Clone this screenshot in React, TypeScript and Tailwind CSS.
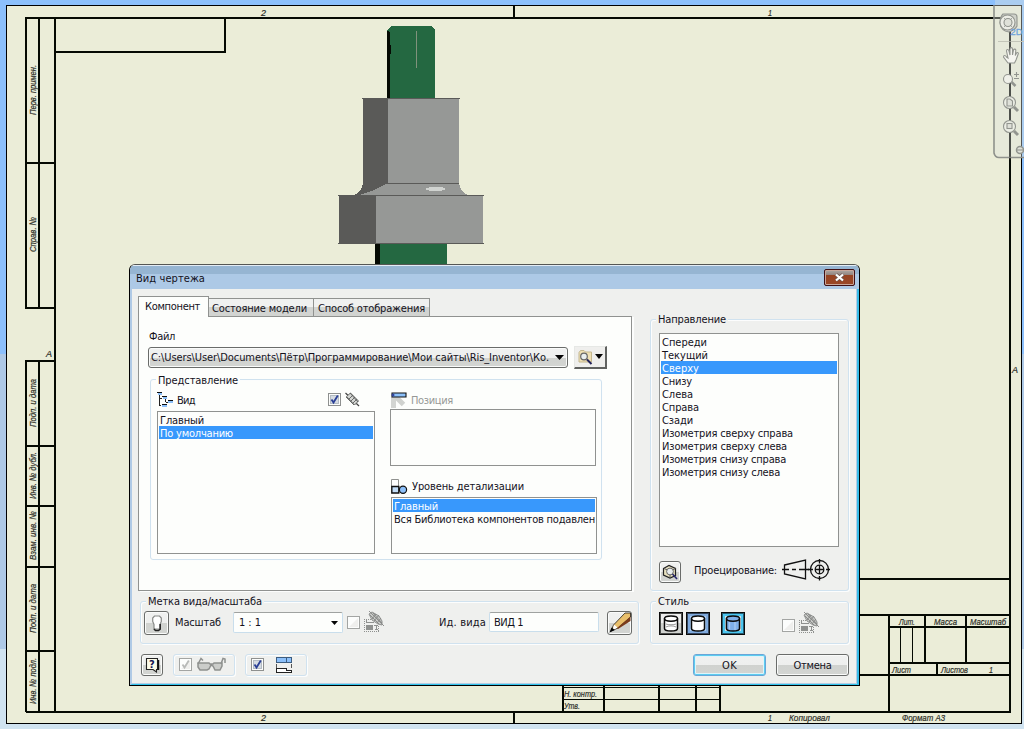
import React, { useLayoutEffect, useRef, useState } from "react";

/* Label whose tracking is tuned so that it takes up a given width. */
function Label({ w, className = "", children }: { w: number; className?: string; children: string }) {
  const ref = useRef<HTMLSpanElement>(null);
  const [gap, setGap] = useState(0);
  useLayoutEffect(() => {
    if (ref.current) {
      const natural = ref.current.getBoundingClientRect().width;
      setGap((w - natural) / children.length);
    }
  }, []);
  return (
    <span ref={ref} style={{ letterSpacing: gap + "px" }} className={"inline-block whitespace-pre leading-[13px] " + className}>
      {children}
    </span>
  );
}

function Group({ title, w, className = "", titleClass = "-top-[7px] bg-[#eff0ee]", children }: { title?: string; w?: number; className?: string; titleClass?: string; children: React.ReactNode }) {
  return (
    <div className={"relative shrink-0 rounded-[3px] border border-[#d0e2ef] shadow-[inset_1px_1px_0_#fcfdfd,1px_1px_0_#fcfdfd] " + className}>
      {title && (
        <div className={"absolute left-[5px] flex h-[13px] px-[2px] " + titleClass}>
          <Label w={w || 0}>{title}</Label>
        </div>
      )}
      {children}
    </div>
  );
}

function Check({ on, dim, className = "" }: { on?: boolean; dim?: boolean; className?: string }) {
  return (
    <svg className={"block shrink-0 " + className} width="13" height="13" viewBox="0 0 13 13">
      <rect x="0.5" y="0.5" width="12" height="12" fill="#fcfdfc" stroke={dim ? "#a3a5a3" : "#8e908f"} />
      {on && !dim && <rect x="2.5" y="2.5" width="8" height="8" fill="#d5dbe2" stroke="#b4bcc4" />}
      {dim && <path d="M2 11 11 2v9z" fill="#efefed" />}
      {on && <path d="M3.5 6.5 5.5 9.5 9.8 2.5" fill="none" stroke={dim ? "#b8bab8" : "#2a3f96"} strokeWidth="1.8" />}
    </svg>
  );
}

function List({ items, selected, className = "" }: { items: [string, number][]; selected: number; className?: string }) {
  return (
    <div className={"shrink-0 overflow-hidden border border-[#909290] bg-[#fdfefc] px-px " + className}>
      {items.map(([t, w], i) => (
        <div key={t} className={"flex h-[13px] pl-px pt-px " + (i === selected ? "bg-[#3898fc] text-white" : "")}>
          <Label w={w}>{t}</Label>
        </div>
      ))}
    </div>
  );
}

const btn = "flex shrink-0 items-center justify-center rounded-[3px] border border-[#6a6c6a] bg-[linear-gradient(#f0f1f0_0%,#eeefee_50%,#d0d2cf_50%,#d3d5d2_100%)] shadow-[inset_0_0_0_1px_#fafbfa] ";

function Tree() {
  return (
    <svg className="block shrink-0" width="16" height="16" viewBox="0 0 16 16" shapeRendering="crispEdges">
      <path d="M1 1h4v2H1zM6 5h4v2H6zM11 9h5v2h-5zM5 13h5v2H5z" fill="#8cc0fa" />
      <path d="M2 3h1v11H2zM3 6h2v1H3zM3 13h1v1H3zM8 7h1v3H8zM9 10h2v1H9z" fill="#222" />
      <path d="M0 .5h5M5 4.500h5M11 8.500h5M5 12.500h5" stroke="#111" />
    </svg>
  );
}

function Link() {
  return (
    <svg className="block shrink-0" width="15" height="15" viewBox="0 0 15 15">
      <path d="M.5 1 14 14" stroke="#444" strokeWidth="1.200" />
      <path d="M1.500 4.500 5.500 1 13.500 9 9.500 13z" fill="#d4d6d3" stroke="#686a68" />
      <path d="M1 5 9 13M5 1l8 9M4 7l4-4M6 9l4-4M8 11l4-4" stroke="#5c5e5c" strokeWidth=".9" />
    </svg>
  );
}

function StyleLink() {
  return (
    <svg className="block shrink-0" width="21" height="22" viewBox="0 0 21 22">
      <path d="M0 8.500h7M.5 8v13M0 20.500h15M14.500 15v6" stroke="#8f918f" strokeDasharray="1 1" fill="none" shapeRendering="crispEdges" />
      <path d="M2 14h7v5H2z" fill="#8f918f" />
      <path d="M2 11.500h8M2.500 9v3M10 14.500h4M12.500 14v5M11 18.500h3" stroke="#8f918f" />
      <path d="M5 3 8 1l7 4 3 5v4l-4-1-6-4z" fill="#c8cac7" stroke="#8f918f" />
      <path d="m5 0 15 15M9 2l9 10M6 4l9 9M8 8l4-5M10 10l5-6M13 12l4-5" stroke="#848684" strokeWidth=".9" />
    </svg>
  );
}

function Cyl({ fill, hidden }: { fill: string; hidden?: boolean }) {
  return (
    <svg className="block shrink-0" width="16" height="17" viewBox="0 0 16 17">
      <path d="M1.500 3.500v10c0 1.500 3 2.500 6.500 2.500s6.500-1 6.500-2.500v-10" fill={fill} stroke="#0a0a0a" strokeWidth="1.500" />
      <ellipse cx="8" cy="3.600" rx="6.500" ry="2.600" fill={fill} stroke="#0a0a0a" strokeWidth="1.500" />
      {hidden && <path d="M3 12c2-1.500 8-1.500 10 0M3 9c2 1 8 1 10 0" fill="none" stroke="#999" strokeWidth="1" />}
      {fill !== "#fff" && <path d="M4.500 7v7.500M10 7V15" stroke="#a8caf2" strokeWidth="1.300" />}
    </svg>
  );
}

type Cap = [string, number, number, number];
const captions: Cap[] = [
  ["2", 261, 15.500, 5], ["1", 768, 15.500, 4], ["2", 261, 720.500, 5], ["1", 768, 720.500, 4],
  ["А", 46, 357, 6], ["А", 1012, 373, 6],
  ["Лит.", 899, 624.500, 16], ["Масса", 934, 624.500, 23], ["Масштаб", 970, 624.500, 36],
  ["Лист", 892, 672.500, 19], ["Листов", 941, 672.500, 27], ["1", 989, 672.500, 4],
  ["Н. контр.", 564, 697, 33], ["Утв.", 564, 709, 16],
  ["Копировал", 789, 720.500, 41], ["Формат А3", 902, 720.500, 43],
];
const sideCaptions: Cap[] = [
  ["Перв. примен.", 36, 115, 50], ["Справ. №", 36, 252, 35],
  ["Подп. и дата", 36, 427, 48], ["Инв. № дубл.", 36, 499, 47],
  ["Взам. инв. №", 36, 560, 49], ["Подп. и дата", 36, 633, 49], ["Инв. № подл.", 36, 704, 46],
];

function Drawing() {
  return (
    <svg className="block" width="1024" height="729" viewBox="0 0 1024 729">
      <rect width="1024" height="354" fill="#8cc0fc" />
      <rect y="354" width="1024" height="295" fill="#aec9e6" />
      <rect y="649" width="1024" height="80" fill="#d0e3f0" />
      <g shapeRendering="crispEdges">
        <rect x="6.500" y="5.500" width="1015" height="718" fill="#ebedd8" stroke="#000" />
        <g stroke="#050a03" strokeWidth="2" fill="none">
          <path d="M26 18H1011M1010 17V713M26 712H1011M55 17V713M26 17V308H55M39 17V308M26 163H55" />
          <path d="M26 712V361H55M39 361V712M26 446H55M26 506H55M26 567H55M26 651H55" />
          <path d="M55 52H225V18M514 6V18M514 712V723" />
          <path d="M855 579H1010M855 615H1010M889 615V712M889 627H1010M925 615V663M966 615V663M889 663H1010M937 663V675M855 675H1010" />
          <path d="M563 680V712M604 680V712M659 680V712M696 680V712M720 680V712" />
        </g>
        <path d="M900.500 627V663M912.500 627V663M563 687.500H720M563 699.500H720" stroke="#050a03" />
      </g>
      <g fontFamily="'Liberation Sans Narrow','Liberation Sans',sans-serif" fontStyle="italic" fontSize="9.500" fill="#2a2c26" stroke="#2a2c26" strokeWidth=".2">
        {captions.map(([t, x, y, w], i) => (
          <text key={i} x={x} y={y} textLength={w} lengthAdjust="spacingAndGlyphs">{t}</text>
        ))}
        {sideCaptions.map(([t, x, y, w], i) => (
          <text key={i} transform={`translate(${x} ${y}) rotate(-90)`} textLength={w} lengthAdjust="spacingAndGlyphs">{t}</text>
        ))}
      </g>
      <g shapeRendering="crispEdges">
        <path d="M391 26H431L435 30V98H387V30z" fill="#246841" />
        <path d="M387 31h2l1 2v12h1v9h-1v44h-3z" fill="#050a03" />
        <path d="M416.500 31V68" stroke="#80927c" />
        <path d="M363 98H459V183Q461 193 468 195H354Q361 193 363 183z" fill="#969896" />
        <path d="M363 98H388V183L374 190 359 195H354Q361 193 363 183z" fill="#5a5a58" />
        <path d="M339 195H483V243H339z" fill="#969896" />
        <path d="M339 195H376V243H339z" fill="#5a5a58" />
        <path d="M362 98.500H460M386 183.500H459M338 195.500H484M338 243.500H484" stroke="#5a5a58" />
        <path d="M424 189 430 187H442L446 189 440 191H430z" fill="#d0d3d0" />
        <path d="M375 244H447V266H375z" fill="#246841" />
        <path d="M375 244H380V266H375z" fill="#050a03" />
      </g>
    </svg>
  );
}

function NavBar() {
  return (
    <svg className="absolute left-[990px] top-0 block" width="34" height="162" viewBox="990 0 34 162">
      <path d="M995 0H1024V158H999Q995 158 995 153z" fill="#e0e2dc" fillOpacity=".38" />
      <path d="M994 5V153Q995 157.500 999 157.500H1024" fill="none" stroke="#8e918c" strokeWidth="1.600" />
      <path d="M998 41.500H1024" stroke="#c3c5b9" />
      <path d="M1010 17V160" stroke="#333" strokeWidth="1.600" opacity=".35" />
      <g fill="#dfe1d9" stroke="#92958f" strokeWidth="1.100">
        <path d="M1003 14h11q3 0 3 3v9q-2 4-8 6-8-1-9-9 0-6 3-9z" fill="#cfd1ca" />
        <circle cx="1007.500" cy="22.500" r="7.500" fill="#ecede6" /><circle cx="1008" cy="22.500" r="4" />
        <path d="m1004 18 2 2M1012 18l-2 2M1004 27l2-2M1012 27l-2-2" fill="none" strokeWidth=".8" />
        <path d="M1008 63l-4.500-6c0-2 2-2 3 0l1.500 1-1.500-7c0-1.800 2-2 2.500 0l1 4v-6c0-1.800 2.500-1.800 2.500 0v6l1-5c.5-1.500 2.500-1 2.300.5l-.5 5 1.200-2.500c1-1 2.200-.3 1.700 1l-2.200 6-1.500 3z" fill="#f5f5f0" />
        <path d="m1011.500 82 4 4" strokeWidth="2.500" /><circle cx="1008" cy="79" r="4.500" fill="#eff0e9" />
        <path d="M1014 74.500h5M1016.500 72v5M1014 78.500h5" fill="none" />
        <path d="m1014 107 4 4" strokeWidth="3" /><circle cx="1009.500" cy="102.500" r="6" fill="#eceee5" />
        <path d="M1007 99h3l2.500 2v5h-5.500z" />
        <path d="m1014 131 4 4" strokeWidth="3" /><circle cx="1009.500" cy="126.500" r="6" fill="#eceee5" /><rect x="1007" y="123.500" width="5" height="5" />
        <circle cx="1020" cy="150" r="3.500" strokeWidth="1.500" /><path d="M1017 150h6" />
      </g>
      <text x="1010.500" y="35" fontSize="9.500" fontFamily="Liberation Sans, sans-serif" fill="#6fa3dc" stroke="#6fa3dc" strokeWidth=".3" textLength="12" lengthAdjust="spacingAndGlyphs">2D</text>
    </svg>
  );
}

const directions: [string, number][] = [
  ["Спереди", 45], ["Текущий", 46], ["Сверху", 37], ["Снизу", 30], ["Слева", 31], ["Справа", 37], ["Сзади", 31],
  ["Изометрия сверху справа", 131], ["Изометрия сверху слева", 125], ["Изометрия снизу справа", 124], ["Изометрия снизу слева", 118],
];

export default function App() {
  return (
    <div className="relative h-[729px] w-[1024px] overflow-hidden text-[11px] leading-[13px] text-[#14121c] [font-family:'DejaVu_Sans_Condensed','DejaVu_Sans',sans-serif]">
      <Drawing />
      <NavBar />
      <div className="absolute left-[129px] top-[264px] flex h-[422px] w-[731px] flex-col overflow-hidden rounded-t-[6px] border border-black border-t-[#555754] bg-[#eff0ee]">
        <div className="flex h-[24px] shrink-0 justify-between border-t border-[#e4ecf4] bg-[linear-gradient(#96b5d2_0,#96b5d2_8px,#adc9e6_8px)] pl-[6px] pr-[4px]">
          <Label w={69} className="mt-[6px]">Вид чертежа</Label>
          <div className="mt-[3px] flex h-[17px] w-[31px] items-center justify-center rounded-[2px] border border-[#401015] bg-[linear-gradient(#aeaaa7_0,#92827c_5px,#964322_5px,#9b4828)] shadow-[inset_0_0_0_1px_#c9a79b]">
            <svg width="11" height="9" viewBox="0 0 11 9"><path d="M2 1.500 9 7.500M9 1.500 2 7.500" stroke="#6a5550" strokeWidth="3.600" /><path d="M2 1.500 9 7.500M9 1.500 2 7.500" stroke="#fff" strokeWidth="2.200" /></svg>
          </div>
        </div>

        <div className="flex flex-1 border-x-2 border-b border-l-[#b0cae6] border-r-[#38bce8] border-b-[#30c4ec] shadow-[inset_-1px_-1px_0_#b4cce4]">
          <div className="flex w-[512px] shrink-0 flex-col pl-[6px] pt-[7px]">
            <div className="flex h-[20px] items-end">
              <div className="relative z-10 -mb-px flex h-[21px] w-[71px] border border-b-0 border-[#909290] bg-[#fdfefc] pl-[6px] pt-[3px]"><Label w={55}>Компонент</Label></div>
              <div className="flex h-[18px] w-[105px] items-center border border-b-0 border-l-0 border-[#909290] bg-[linear-gradient(#f0f1f0_50%,#d2d4d1_50%)] pl-[3px] pt-px"><Label w={95}>Состояние модели</Label></div>
              <div className="flex h-[18px] w-[116px] items-center border border-b-0 border-l-0 border-[#909290] bg-[linear-gradient(#f0f1f0_50%,#d2d4d1_50%)] pl-[4px] pt-px"><Label w={107}>Способ отображения</Label></div>
            </div>
            <div className="flex h-[275px] w-[494px] shrink-0 flex-col border border-[#909290] bg-[#fdfefc] pl-[9px] pt-[13px] shadow-[2px_1px_0_#fcfdfc]">
              <Label w={26} className="ml-px self-start">Файл</Label>
              <div className="mt-[2px] flex h-[24px] items-center">
                <div className={btn + "h-[21px] w-[420px] !justify-between pl-[2px] pr-[3px]"}>
                  <Label w={398} className="mt-px">C:\Users\User\Documents\Пётр\Программирование\Мои сайты\Ris_Inventor\Ко.</Label>
                  <svg width="9" height="5" viewBox="0 0 9 5"><path d="M0 0h9L4.500 5z" fill="#050505" /></svg>
                </div>
                <div className="ml-[6px] flex h-[23px] w-[33px] items-center justify-between border border-b-2 border-r-2 border-b-[#606260] border-r-[#606260] border-l-[#e6e8e5] border-t-[#e6e8e5] bg-[#efefed] pl-[3px] pr-[2px]">
                  <svg width="15" height="16" viewBox="0 0 15 16"><path d="M1 3.500 2.500 1.500H6L7.500 3H13.500v10H1z" fill="#efe0b4" stroke="#c4b78e" /><circle cx="6" cy="7.500" r="3.300" fill="#e9eeee" stroke="#666" strokeWidth="1.200" /><path d="m9 10.500 4.500 4.500" stroke="#222258" strokeWidth="2" /></svg>
                  <svg width="8" height="5" viewBox="0 0 8 5"><path d="M0 0h8L4 5z" fill="#050505" /></svg>
                </div>
              </div>
              <Group title="Представление" w={80} titleClass="-top-[6px] bg-[#fdfefc]" className="ml-[2px] mt-[10px] flex h-[181px] w-[452px] pl-[6px] pt-[12px]">
                <div className="flex w-[233px] shrink-0 flex-col">
                  <div className="flex h-[19px] items-start">
                    <Tree />
                    <Label w={18} className="ml-[4px] mt-[2px]">Вид</Label>
                    <div className="ml-[133px] flex gap-[4px]"><Check on className="mt-px" /><Link /></div>
                  </div>
                  <List className="h-[143px] w-[218px] pt-px" selected={1} items={[["Главный", 44], ["По умолчанию", 73]]} />
                </div>
                <div className="flex flex-1 flex-col">
                  <div className="flex h-[17px] items-start pl-px">
                    <svg className="block" width="16" height="17" viewBox="0 0 16 17"><path d="M0 5h5v11H0z" fill="#d3d5d2" /><path d="m4 4 8.500 8.500" stroke="#d0d2cf" strokeWidth="5" /><path d="M1 1h14v4H1z" fill="#8cc0fa" stroke="#111" strokeWidth="1.100" /><circle cx="2" cy="3" r="1.500" fill="#33459b" /></svg>
                    <Label w={42} className="ml-[4px] mt-[2px] text-[#969896]">Позиция</Label>
                  </div>
                  <div className="h-[57px] w-[206px] border border-[#909290]" />
                  <div className="flex h-[31px] items-end pb-[3px] pl-px">
                    <svg className="block" width="17" height="15" viewBox="0 0 17 15"><path d="M.5.5h7v7h-7z" fill="#fff" stroke="#8f918f" /><path d="M.8 7.500h7v6.500h-7z" fill="#c3def8" stroke="#111" strokeWidth="1.400" /><circle cx="12" cy="10.800" r="3.600" fill="#8cc0fa" stroke="#111" strokeWidth="1.200" /></svg>
                    <Label w={112} className="ml-[4px] mb-px">Уровень детализации</Label>
                  </div>
                  <List className="ml-px h-[57px] w-[206px] pt-px" selected={0} items={[["Главный", 44], ["Вся Библиотека компонентов подавлен", 201]]} />
                </div>
              </Group>
            </div>

            <Group title="Метка вида/масштаба" w={114} className="ml-[2px] mt-[10px] flex h-[43px] w-[499px] items-start pl-[3px] pt-[9px]">
              <div className={btn + "h-[24px] w-[25px]"}>
                <svg width="12" height="18" viewBox="0 0 12 18"><path d="M3 10.500 1.700 7.500V4L3.500 2h5l1.800 2v3.500L9 10.500V15H3z" fill="#fff" stroke="#888a88" strokeWidth="1.200" /><path d="M9.200 10v5.200L7.500 16.500h-3L3 15" fill="none" stroke="#222" strokeWidth="1.500" /></svg>
              </div>
              <Label w={46} className="ml-[6px] mt-[5px]">Масштаб</Label>
              <div className="ml-[12px] mt-px flex h-[21px] w-[110px] items-center justify-between rounded-[2px] border border-[#c9deec] border-t-[#9fa2a0] bg-[#fdfefc] pl-[5px] pr-[4px]"><Label w={22}>1 : 1</Label><svg width="7" height="4" viewBox="0 0 7 4"><path d="M0 0h7L3.500 4z" fill="#050505" /></svg></div>
              <Check className="ml-[4px] mt-[5px]" dim />
              <div className="ml-[4px]"><StyleLink /></div>
              <Label w={47} className="ml-[54px] mt-[5px]">Ид. вида</Label>
              <div className="ml-[3px] mt-px flex h-[20px] w-[110px] items-center rounded-[2px] border border-[#c9deec] border-t-[#9fa2a0] bg-[#fdfefc] pl-[4px]"><Label w={29}>ВИД 1</Label></div>
              <div className={btn + "ml-[8px] h-[24px] w-[25px]"}>
                <svg width="23" height="22" viewBox="0 0 23 22"><path d="m3 19 2.500-6L17 1h5.500v4L10 16z" fill="#e9bf6b" stroke="#1e1a14" strokeWidth=".8" /><path d="m9 16 13.500-11.500V9L10 17z" fill="#7a3c1c" /><path d="m6 12.500 3.500 3-5 3z" fill="#fff" /><path d="m1.500 20.500 2-5L7 18z" fill="#050505" /></svg>
              </div>
            </Group>

            <div className="mt-[9px] flex h-[23px] items-center pl-[3px]">
              <div className={btn + "h-[22px] w-[22px]"}>
                <svg width="15" height="16" viewBox="0 0 15 16"><path d="M1.500 1.500h11v11h-1v2.500l-3.500-2.500H1.500z" fill="#fdfce8" stroke="#222" strokeWidth="1.100" /><path d="M13.500 3v10" stroke="#111" strokeWidth="1.500" /><text x="4" y="11" fontSize="11" fontWeight="bold" fill="#151552">?</text></svg>
              </div>
              <Group className="ml-[10px] flex h-[22px] w-[62px] items-center pl-[5px]">
                <Check on dim />
                <svg className="ml-[5px] block" width="29" height="15" viewBox="0 0 29 15"><path d="M1 6h11l1 1h3l1-1h8v3l-2 4h-5l-2-4-2-1-2 4-2 1H3L1 10z" fill="#cbcdca" stroke="#8f918f" strokeWidth="1.500" /><path d="M1 7 4 1.500l2 2M24 7l2-5.500 2 .5v4" fill="none" stroke="#8f918f" strokeWidth="1.500" /></svg>
              </Group>
              <Group className="ml-[10px] flex h-[22px] w-[62px] items-center pl-[5px]">
                <Check on />
                <svg className="ml-[12px] block" width="16" height="16" viewBox="0 0 16 16" shapeRendering="crispEdges"><path d="M.5.500h15v5H.5z" fill="#8cc0fa" stroke="#3d5d80" /><path d="M10.500 1v5" stroke="#3d5d80" /><path d="M.5 7v4M15.500 7v4" stroke="#555" /><path d="M.5 15.500v-4H10v2h5.500v2z" fill="#fff" stroke="#222" /></svg>
              </Group>
            </div>
          </div>

          <div className="flex w-[212px] flex-col pl-[6px] pt-[30px]">
            <Group title="Направление" w={68} className="h-[272px] w-[199px] pl-[8px] pt-[13px]">
              <List className="h-[214px] w-[180px] pt-px" selected={2} items={directions} />
              <div className="mt-[14px] flex items-start">
                <div className={btn + "h-[22px] w-[22px]"}>
                  <svg width="16" height="16" viewBox="0 0 16 16"><path d="M1.500 4.500 7 1.500l6.500 3v7L8 14l-6.500-3z" fill="#e8e1bf" stroke="#222" strokeWidth="1.200" /><path d="m2 4.500 6 2.500 5.500-2.500M8 7v7" stroke="#555" fill="none" /><circle cx="8" cy="7.500" r="3.400" fill="#e9eef0" stroke="#666" /><path d="m10.500 10 4.500 5" stroke="#2a2a70" strokeWidth="1.600" /></svg>
                </div>
                <Label w={83} className="ml-[13px] mt-[3px]">Проецирование:</Label>
                <svg className="ml-[5px] -mt-[2px] block" width="48" height="22" viewBox="0 0 48 22"><g fill="none" stroke="#111" strokeWidth="1.300"><path d="M2.500 6 23.500 1v19L2.500 15z" /><path d="M0 10.500h7M10 10.500h4M17 10.500h10" /><circle cx="37.500" cy="10.500" r="9" /><circle cx="37.500" cy="10.500" r="4.300" /><path d="M26 10.500h5M33 10.500h9M44 10.500h4M37.500 0v4.500M37.500 6v9M37.500 17v4.500" /></g></svg>
              </div>
            </Group>
            <Group title="Стиль" w={31} className="mt-[10px] flex h-[43px] w-[199px] items-start pl-[8px] pt-[10px]">
              <div className="flex h-[23px] w-[24px] items-center justify-center border border-[#0a0a0a] bg-[linear-gradient(#eee_50%,#d0d2cf_50%)] shadow-[inset_0_0_0_1px_#4a4c4a]"><Cyl fill="#fff" hidden /></div>
              <div className="ml-[3px] flex h-[23px] w-[24px] items-center justify-center border border-[#0a0a0a] bg-[#a9cbf2] shadow-[inset_0_0_0_1px_#34465e,inset_0_0_0_3px_#7faade]"><Cyl fill="#fff" /></div>
              <div className="ml-[11px] flex h-[23px] w-[24px] items-center justify-center border border-[#0a0a0a] bg-[#d5dcdf] shadow-[inset_0_0_0_1px_#235a70,inset_0_0_0_3px_#4cc6f0]"><Cyl fill="#7fb0ea" /></div>
              <Check className="ml-[37px] mt-[7px]" dim />
              <div className="ml-[4px]"><StyleLink /></div>
            </Group>
            <div className="mt-[10px] flex pl-[43px]">
              <div className={btn + "h-[22px] w-[73px] !border-[#6aa6d8] !shadow-[inset_0_0_0_1px_#5ccdf0,inset_0_0_0_2px_#dff4fa]"}><Label w={15}>OK</Label></div>
              <div className={btn + "ml-[10px] h-[22px] w-[73px]"}><Label w={38}>Отмена</Label></div>
            </div>
          </div>
        </div>
      </div>
    </div>
  );
}
